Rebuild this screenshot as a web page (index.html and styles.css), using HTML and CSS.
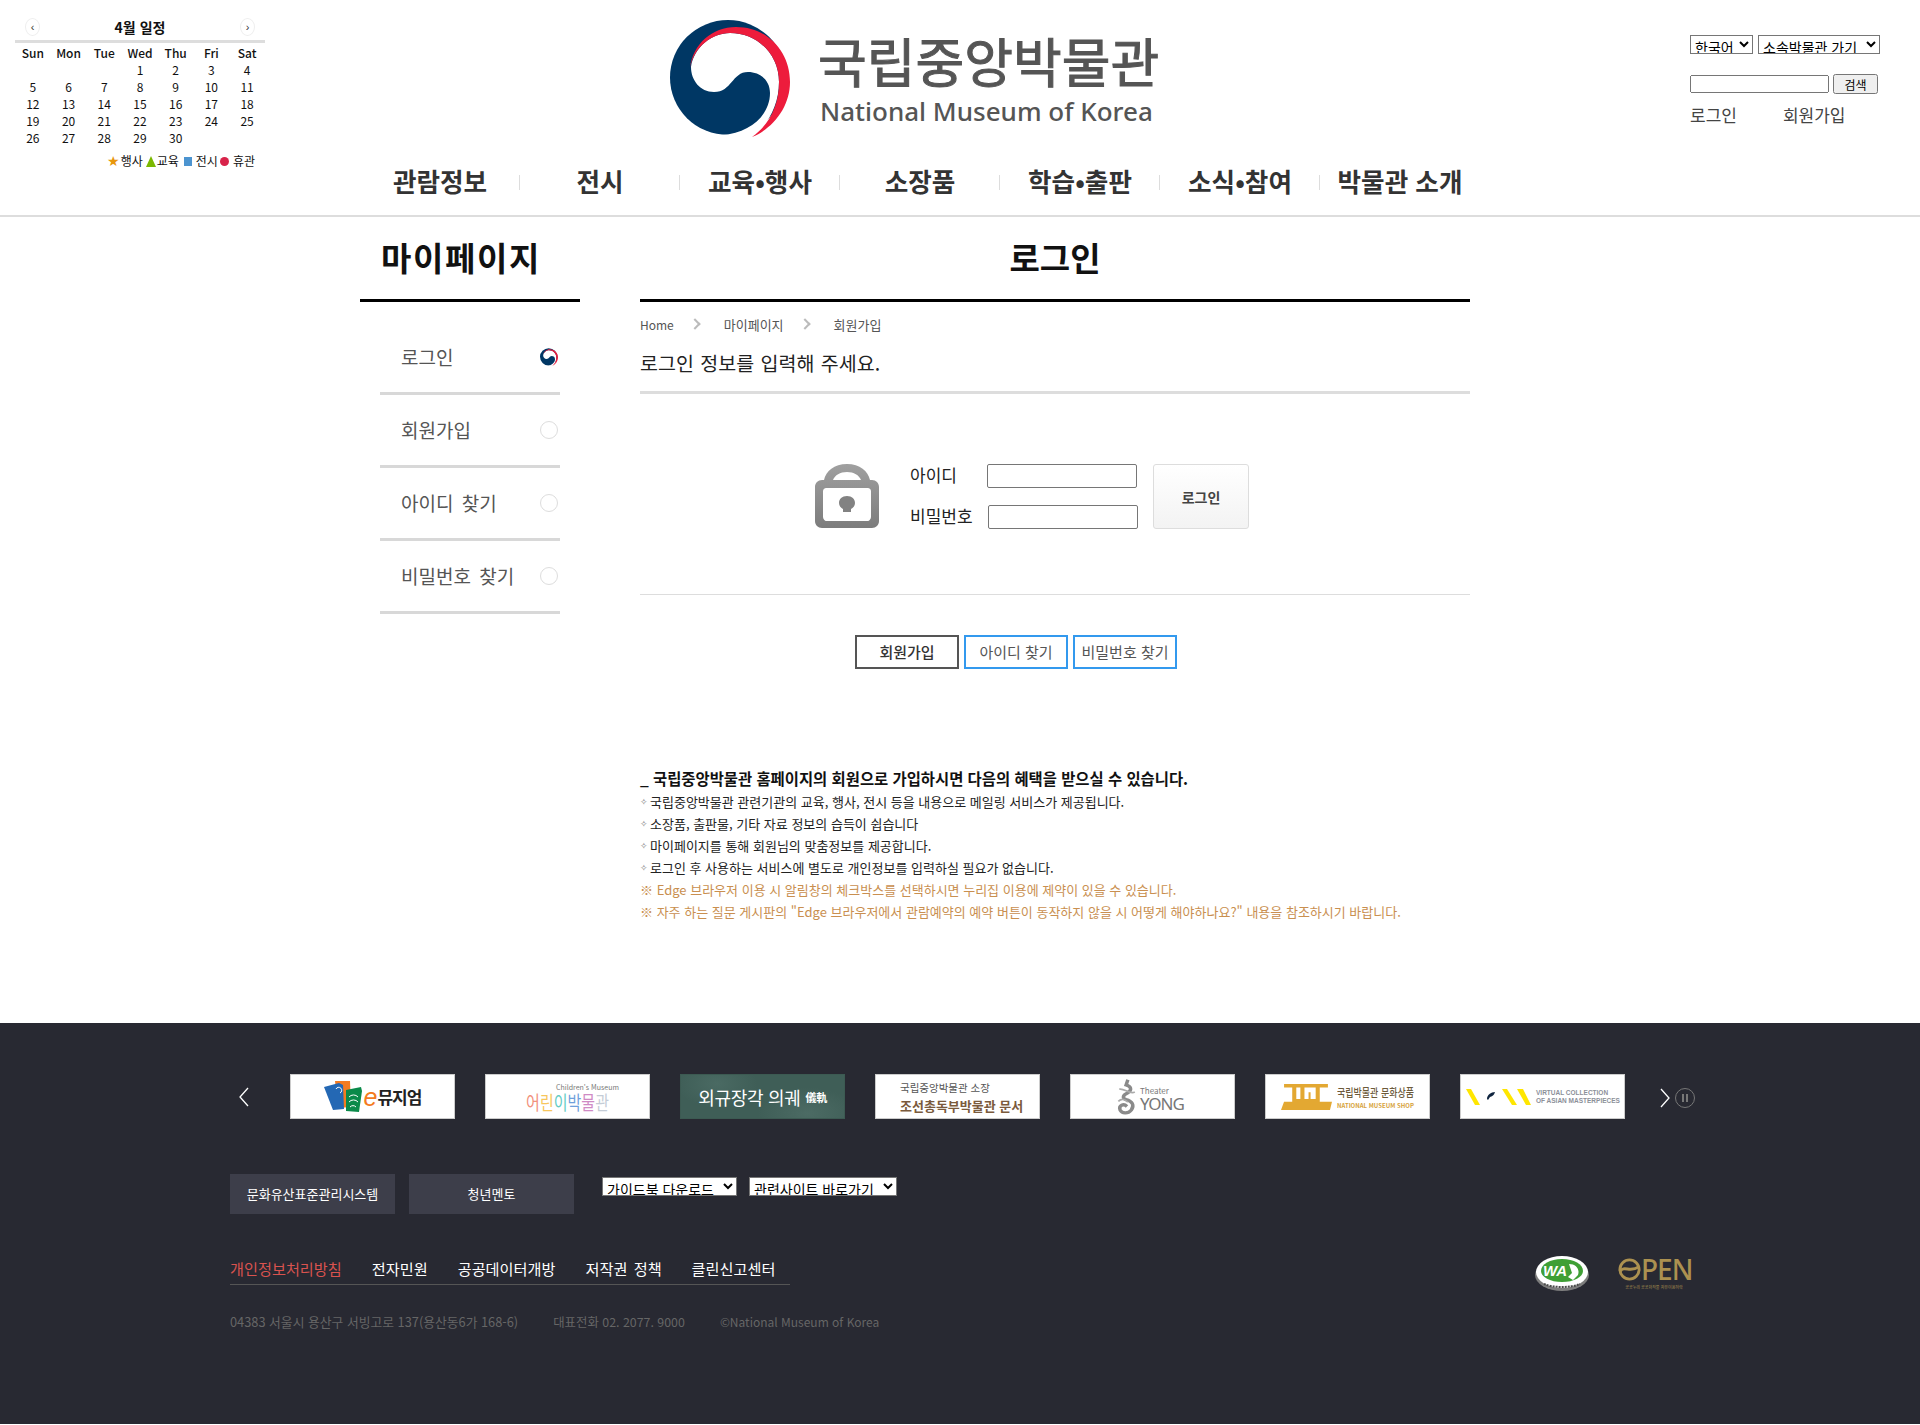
FILE: index.html
```html
<!DOCTYPE html>
<html lang="ko">
<head>
    <meta charset="UTF-8">
    <meta name="viewport" content="width=device-width, initial-scale=1.0">
    <title>로그인 | 국립중앙박물관</title>
    <link rel="stylesheet" href="styles.css">
</head>
<body>
    <svg class="defs" width="0" height="0">
        <symbol id="emblem" viewBox="0 0 120 117">
            <ellipse cx="58" cy="57.5" rx="58" ry="57.5" fill="#003764"/>
            <path fill="#fff" d="M21 47C24 27 42 13 60 13C88 13 109 35 109 62C109 85 98 105 82 117L52 115C80 113 100 95 100 73C100 60 90 52 78 52C62 52 62 72 44 72C30 72 21 60 21 47Z"/>
            <path fill="#ed1c3c" d="M20 48C23 24 42 7 66 7C98 7 120 32 120 62C120 86 104 108 82 117C100 104 109 85 109 62C109 35 88 13 60 13C42 13 24 27 20 48Z"/>
        </symbol>
    </svg>

    <header class="site-header">
        <div class="calendar">
            <div class="cal-head">
                <button class="cal-btn">&#8249;</button>
                <strong>4월 일정</strong>
                <button class="cal-btn">&#8250;</button>
            </div>
            <table class="cal-table">
                <thead>
                    <tr><th>Sun</th><th>Mon</th><th>Tue</th><th>Wed</th><th>Thu</th><th>Fri</th><th>Sat</th></tr>
                </thead>
                <tbody>
                    <tr><td></td><td></td><td></td><td>1</td><td>2</td><td>3</td><td>4</td></tr>
                    <tr><td>5</td><td>6</td><td>7</td><td>8</td><td>9</td><td>10</td><td>11</td></tr>
                    <tr><td>12</td><td>13</td><td>14</td><td>15</td><td>16</td><td>17</td><td>18</td></tr>
                    <tr><td>19</td><td>20</td><td>21</td><td>22</td><td>23</td><td>24</td><td>25</td></tr>
                    <tr><td>26</td><td>27</td><td>28</td><td>29</td><td>30</td><td></td><td></td></tr>
                </tbody>
            </table>
            <div class="cal-legend">
                <span class="lg-star">&#9733;</span>행사
                <i class="lg-tri"></i>교육
                <i class="lg-sq"></i>전시
                <i class="lg-dot"></i>휴관
            </div>
        </div>

        <a class="logo" href="#">
            <svg class="logo-mark"><use href="#emblem"/></svg>
            <span class="logo-text">
                <b>국립중앙박물관</b>
                <em>National Museum of Korea</em>
            </span>
        </a>

        <div class="tools">
            <div class="tools-row">
                <select class="sel-lang"><option>한국어</option></select>
                <select class="sel-branch"><option>소속박물관 가기</option></select>
            </div>
            <div class="tools-row search">
                <input type="text">
                <button>검색</button>
            </div>
            <div class="tools-links">
                <a href="#">로그인</a>
                <a href="#">회원가입</a>
            </div>
        </div>

        <nav class="gnb">
            <a href="#">관람정보</a>
            <a href="#">전시</a>
            <a href="#">교육•행사</a>
            <a href="#">소장품</a>
            <a href="#">학습•출판</a>
            <a href="#">소식•참여</a>
            <a href="#">박물관 소개</a>
        </nav>
    </header>

    <main class="page">
        <aside class="side">
            <h2 class="page-title">마이페이지</h2>
            <ul class="side-menu">
                <li><a href="#">로그인</a><svg class="mark"><use href="#emblem"/></svg></li>
                <li><a href="#">회원가입</a><i class="mark ring"></i></li>
                <li><a href="#">아이디 찾기</a><i class="mark ring"></i></li>
                <li><a href="#">비밀번호 찾기</a><i class="mark ring"></i></li>
            </ul>
        </aside>

        <section class="content">
            <h2 class="page-title">로그인</h2>
            <div class="crumbs">
                <span class="crumb-home">Home</span>
                <span class="crumb-sep"></span>
                <span>마이페이지</span>
                <span class="crumb-sep"></span>
                <span>회원가입</span>
            </div>
            <h3 class="lead">로그인 정보를 입력해 주세요.</h3>

            <form class="login">
                <svg class="lock" viewBox="0 0 64 64">
                    <defs>
                        <linearGradient id="lockfill" x1="0" y1="0" x2="0" y2="1">
                            <stop offset="0" stop-color="#a0a0a0"/>
                            <stop offset="1" stop-color="#7c7c7c"/>
                        </linearGradient>
                    </defs>
                    <path fill="url(#lockfill)" fill-rule="evenodd" d="M32 0C19 0 11 7 9 16H7C3 16 0 19 0 23V57C0 61 3 64 7 64H57C61 64 64 61 64 57V23C64 19 61 16 57 16H55C53 7 45 0 32 0ZM32 8C39 8 44 11 46 16H18C20 11 25 8 32 8ZM11 24H53C54 24 56 25 56 27V53C56 55 54 57 53 57H11C10 57 8 55 8 53V27C8 25 10 24 11 24Z"/>
                    <path fill="#828282" d="M32 32C27 32 24 35 24 39C24 42 26 44 28 45V48H36V45C38 44 40 42 40 39C40 35 37 32 32 32Z"/>
                </svg>
                <div class="login-fields">
                    <label><span>아이디</span> <input type="text"></label>
                    <label class="pw"><span>비밀번호</span> <input type="password"></label>
                </div>
                <button class="login-btn" type="button">로그인</button>
            </form>

            <div class="member-btns">
                <a class="on" href="#">회원가입</a>
                <a href="#">아이디 찾기</a>
                <a href="#">비밀번호 찾기</a>
            </div>

            <div class="benefit">
                <strong>_ 국립중앙박물관 홈페이지의 회원으로 가입하시면 다음의 혜택을 받으실 수 있습니다.</strong>
                <ul>
                    <li>국립중앙박물관 관련기관의 교육, 행사, 전시 등을 내용으로 메일링 서비스가 제공됩니다.</li>
                    <li>소장품, 출판물, 기타 자료 정보의 습득이 쉽습니다</li>
                    <li>마이페이지를 통해 회원님의 맞춤정보를 제공합니다.</li>
                    <li>로그인 후 사용하는 서비스에 별도로 개인정보를 입력하실 필요가 없습니다.</li>
                </ul>
                <p>※ Edge 브라우저 이용 시 알림창의 체크박스를 선택하시면 누리집 이용에 제약이 있을 수 있습니다.</p>
                <p>※ 자주 하는 질문 게시판의 "Edge 브라우저에서 관람예약의 예약 버튼이 동작하지 않을 시 어떻게 해야하나요?" 내용을 참조하시기 바랍니다.</p>
            </div>
        </section>
    </main>

    <footer class="site-footer">
        <div class="slider">
            <svg class="arrow prev" viewBox="0 0 10 20"><path d="M9 1L1 10L9 19"/></svg>
            <a class="bn" href="#">
                <svg class="bn1-icon" viewBox="0 0 38 31">
                    <path fill="#f47b20" d="M11 0H26L27 26L14 27Z"/>
                    <path fill="#2468b4" d="M0 6L15 2L19 4L20 28L9 29Z"/>
                    <path fill="#0a8a4a" d="M22 9L37 6L38 10L35 31L22 30Z"/>
                    <path fill="none" stroke="#fff" d="M12 8a3 3 0 1 1 4 4M25 16a6 6 0 0 1 9 0M25 21a6 6 0 0 1 9 0M26 26a4 4 0 0 1 6 0"/>
                </svg>
                <span class="bn1-e">e</span><span class="bn1-txt">뮤지엄</span>
            </a>
            <a class="bn bn2" href="#">
                <small>Children's Museum</small>
                <span><i class="c1">어</i><i class="c2">린</i><i class="c3">이</i><i class="c4">박</i><i class="c5">물</i><i class="c6">관</i></span>
            </a>
            <a class="bn bn3" href="#">외규장각 의궤<small>儀軌</small></a>
            <a class="bn bn4" href="#">
                <small>국립중앙박물관 소장</small>
                <b>조선총독부박물관 문서</b>
            </a>
            <a class="bn bn5" href="#">
                <svg class="dragon" viewBox="0 0 24 44">
                    <path fill="none" stroke="#8a8a8a" stroke-width="4" d="M13 2L11 8C17 10 18 14 13 17C7 20 6 23 11 25C18 27 21 31 17 37C13 42 6 41 4 37C2 32 8 29 12 33"/>
                    <path fill="none" stroke="#aaa" stroke-width="2" d="M3 13C8 11 16 20 21 16M2 27C6 23 10 25 13 28"/>
                </svg>
                <span><small>Theater</small><b>YONG</b></span>
            </a>
            <a class="bn bn6" href="#">
                <svg class="shop" viewBox="0 0 50 38" preserveAspectRatio="none">
                    <path fill="#e3a832" d="M3 0H46V5H38V26H50L48 38H0L3 26H11V5H3ZM15 5V22H19V5ZM23 5V22H27V12H29V22H34V5Z"/>
                </svg>
                <span><b>국립박물관 문화상품</b><small>NATIONAL MUSEUM SHOP</small></span>
            </a>
            <a class="bn bn7" href="#">
                <svg class="vc" viewBox="0 0 66 16">
                    <path fill="#ffe600" d="M0 0H5L14 16H9ZM36 0H41L51 16H46ZM51 0H57L65 16H60Z"/>
                    <path fill="#10253f" d="M21 10C21 6 25 3 29 3C28 6 27 7 24 8L22 11Z"/>
                </svg>
                <span>VIRTUAL COLLECTION<br>OF ASIAN MASTERPIECES</span>
            </a>
            <svg class="arrow next" viewBox="0 0 10 20"><path d="M1 1L9 10L1 19"/></svg>
            <button class="pause"><i></i><i></i></button>
        </div>

        <div class="foot-links">
            <a class="foot-btn" href="#">문화유산표준관리시스템</a>
            <a class="foot-btn" href="#">청년멘토</a>
            <select class="sel-guide"><option>가이드북 다운로드</option></select>
            <select class="sel-site"><option>관련사이트 바로가기</option></select>
        </div>

        <div class="foot-bottom">
            <div>
                <ul class="policy">
                    <li><a class="red" href="#">개인정보처리방침</a></li>
                    <li><a href="#">전자민원</a></li>
                    <li><a href="#">공공데이터개방</a></li>
                    <li><a href="#">저작권 정책</a></li>
                    <li><a href="#">클린신고센터</a></li>
                </ul>
                <div class="address">
                    <span>04383 서울시 용산구 서빙고로 137(용산동6가 168-6)</span>
                    <span class="tel">대표전화 02. 2077. 9000</span>
                    <span class="copy">©National Museum of Korea</span>
                </div>
            </div>
            <div class="certs">
                <svg class="wa" viewBox="0 0 54 38">
                    <ellipse cx="27" cy="20" rx="27" ry="16" fill="#7d7d7d"/>
                    <ellipse cx="27" cy="17" rx="26" ry="16" fill="#fff"/>
                    <path fill="#3f9f35" d="M6 16C6 9 15 4 27 4C39 4 48 9 48 16C48 22 39 27 27 27C15 27 6 22 6 16Z"/>
                    <text x="8" y="21" class="wa-text">WA</text>
                    <path fill="#fff" d="M34 9C41 9 45 14 43 20L38 25L33 22L37 18Z"/>
                    <path fill="none" stroke="#4a4a4a" stroke-width="2" stroke-dasharray="2 1" d="M9 29C18 33 36 33 45 29"/>
                </svg>
                <div class="open">
                    <span class="open-mark">
                        <svg class="open-o" viewBox="0 0 24 24"><circle cx="12" cy="12" r="10"/><path d="M2 14C7 7 12 16 22 9"/></svg>PEN
                    </span>
                    <small>공공누리 공공저작물 자유이용허락</small>
                </div>
            </div>
        </div>
    </footer>
</body>
</html>
```

FILE: styles.css
```css
* { box-sizing: border-box; }
html, body { margin: 0; padding: 0; }
body { font-family: "Noto Sans CJK KR", "Noto Sans", sans-serif; color: #222; background: #fff; }
a { color: inherit; text-decoration: none; }
ul { list-style: none; margin: 0; padding: 0; }
h2, h3, p { margin: 0; }
.defs { display: block; height: 0; }

/* header */
.site-header { display: grid; grid-template-columns: 360px 1120px 1fr; grid-template-rows: 165px 50px; height: 217px; border-bottom: 2px solid #ddd; }
.calendar { grid-row: 1 / 3; width: 250px; margin-left: 15px; padding-top: 18px; font-size: 12px; color: #111; }
.cal-head { display: flex; justify-content: space-between; align-items: center; height: 25px; padding: 0 10px 4px; border-bottom: 3px solid #ddd; font-size: 14px; }
.cal-btn { width: 15px; height: 18px; padding: 0; border: 1px solid #eee; border-radius: 50%; background: #fff; font-size: 11px; line-height: 14px; color: #333; }
.cal-table { width: 100%; table-layout: fixed; border-collapse: collapse; margin-top: 1px; }
.cal-table th, .cal-table td { height: 17px; padding: 0; text-align: center; line-height: 17px; font-weight: 400; }
.cal-table th { font-weight: 500; }
.cal-legend { display: flex; justify-content: flex-end; align-items: center; gap: 1px; height: 18px; margin-top: 6px; padding-right: 10px; line-height: 18px; font-size: 12px; }
.lg-star { color: #e8970c; font-size: 14px; font-family: "DejaVu Sans", sans-serif; }
.lg-tri { width: 0; height: 0; margin-left: 2px; border: 5px solid transparent; border-top: 0; border-bottom: 11px solid #7ab800; }
.lg-sq { width: 8px; height: 9px; margin: 0 3px 0 4px; background: #4c94d0; }
.lg-dot { width: 9px; height: 9px; margin: 0 3px 0 1px; border-radius: 50%; background: #d8234a; }

.logo { grid-column: 2; grid-row: 1; display: flex; gap: 28px; padding: 20px 0 0 310px; }
.logo-mark { width: 120px; height: 117px; }
.logo-text { display: block; padding-top: 16px; color: #555; }
.logo-text b { display: block; font-size: 53px; line-height: 49px; font-weight: 400; white-space: nowrap; -webkit-text-stroke: 1px #555; }
.logo-text em { display: block; margin-top: 13px; padding-left: 2px; font-family: "Noto Sans", sans-serif; font-style: normal; font-size: 26px; line-height: 26px; font-weight: 500; white-space: nowrap; }

.tools { grid-column: 3; grid-row: 1; padding: 35px 0 0 210px; }
.tools-row { display: flex; gap: 5px; }
.tools-row select { height: 19px; padding: 0; font-family: inherit; font-size: 14px; background: #fff; }
.sel-lang { width: 63px; }
.sel-branch { width: 122px; }
.search { align-items: center; gap: 4px; margin-top: 20px; }
.search input { width: 139px; height: 18px; }
.search button { width: 45px; height: 20px; padding: 0; font-family: inherit; font-size: 12px; }
.tools-links { display: flex; gap: 46px; margin-top: 11px; font-size: 17px; line-height: 20px; color: #444; }

.gnb { grid-column: 2; grid-row: 2; display: flex; align-items: flex-start; }
.gnb a { width: 160px; height: 34px; line-height: 32px; text-align: center; font-size: 25.6px; font-weight: 700; color: #333; white-space: nowrap; background: linear-gradient(#ddd, #ddd) right center / 1px 15px no-repeat; }
.gnb a:last-child { background: none; }

/* main */
.page { display: flex; gap: 60px; height: 806px; padding-left: 360px; }
.side { width: 220px; }
.content { width: 830px; }
.page-title { height: 85px; border-bottom: 3px solid #000; line-height: 80px; text-align: center; font-size: 33px; font-weight: 700; color: #111; }
.side .page-title { padding-right: 18px; letter-spacing: 1.6px; }
.side-menu { padding: 20px 20px 0; }
.side-menu li { display: flex; justify-content: space-between; align-items: center; height: 73px; padding: 0 2px 0 21px; border-bottom: 3px solid #d8d8d8; font-size: 19px; word-spacing: 3px; color: #555; }
.side-menu a { padding-bottom: 2px; }
.mark { display: block; width: 18px; height: 18px; }
.ring { border: 1px solid #ddd; border-radius: 50%; }

.crumbs { display: flex; align-items: center; height: 16px; margin-top: 14px; margin-bottom: 2px; font-size: 13px; color: #555; }
.crumb-home { font-size: 12px; }
.crumb-sep { width: 8px; height: 8px; margin: 0 25px 0 17px; border: solid #bbb; border-width: 2px 2px 0 0; transform: rotate(45deg); }
.lead { display: flex; align-items: center; height: 60px; border-bottom: 3px solid #ddd; font-size: 19.5px; font-weight: 400; word-spacing: 1px; color: #222; }

.login { display: flex; align-items: flex-start; height: 201px; padding: 70px 0 0 175px; border-bottom: 1px solid #ddd; }
.lock { width: 64px; height: 64px; margin-right: 31px; }
.login-fields { display: grid; gap: 17px; width: 228px; }
.login-fields label { display: flex; justify-content: space-between; align-items: center; width: 227px; height: 24px; font-size: 17px; color: #222; }
.login-fields label span { padding-bottom: 4px; }
.login-fields input { width: 150px; height: 24px; padding: 0 4px; border: 1px solid #767676; border-radius: 2px; }
.login-fields .pw { width: 228px; }
.login-btn { width: 96px; height: 65px; margin-left: 15px; border: 1px solid #ddd; border-radius: 3px; background: linear-gradient(#fff, #f3f3f3); font-family: inherit; font-size: 14px; font-weight: 700; color: #444; }

.member-btns { display: flex; gap: 5px; padding: 40px 0 0 215px; }
.member-btns a { width: 104px; height: 34px; border: 2px solid #3399ee; line-height: 29px; text-align: center; font-size: 15px; color: #555; }
.member-btns .on { border-color: #555; font-weight: 500; color: #333; }

.benefit { margin-top: 98px; font-size: 13px; line-height: 22px; color: #222; white-space: nowrap; }
.benefit strong { display: block; height: 24px; font-size: 15.4px; font-weight: 700; color: #111; }
.benefit li { display: flex; align-items: center; height: 22px; }
.benefit li::before { content: "\2727"; width: 10px; font-family: "DejaVu Sans", sans-serif; font-size: 9px; color: #777; }
.benefit p { height: 22px; color: #c98f50; }

/* footer */
.site-footer { height: 401px; padding-top: 51px; background: #282932; color: #fff; }
.slider { display: flex; align-items: center; height: 45px; padding-left: 239px; }
.arrow { width: 10px; height: 20px; }
.arrow path { fill: none; stroke: #fff; stroke-width: 1.3; }
.prev { margin-right: 41px; margin-top: 1px; }
.next { margin-left: 35px; margin-top: 3px; }
.pause { display: flex; justify-content: center; align-items: center; gap: 2px; width: 20px; height: 20px; margin-left: 5px; margin-top: 3px; padding: 0; border: 1px solid #777; border-radius: 50%; background: none; }
.pause i { width: 2px; height: 8px; border: solid #777; border-width: 0 1px; }
.bn { display: flex; flex: none; justify-content: center; align-items: center; width: 165px; height: 45px; margin-right: 30px; border: 1px solid #ccc; background: #fff; color: #333; overflow: hidden; white-space: nowrap; }
.bn7 { margin-right: 0; }
.bn1-icon { width: 38px; height: 31px; }
.bn1-e { margin: 0 0 0 2px; font-family: "Liberation Sans", sans-serif; font-style: italic; font-size: 25px; line-height: 30px; color: #f47b20; }
.bn1-txt { font-size: 17px; font-weight: 700; letter-spacing: -1px; color: #222; }
.bn2 { flex-direction: column; padding-top: 2px; }
.bn2 small { display: block; margin-left: 40px; font-size: 7px; line-height: 8px; color: #777; }
.bn2 span { display: block; font-size: 15px; line-height: 22px; transform: scaleY(1.3); }
.bn2 i { font-style: normal; }
.c1 { color: #f2917c; }
.c2 { color: #f7c65c; }
.c3 { color: #63ccc4; }
.c4 { color: #6f9fdc; }
.c5 { color: #cf8ac4; }
.c6 { color: #c4ccd6; }
.bn3 { border-color: #3c5a52; background: radial-gradient(ellipse 40px 24px at 22% 20%, #4a6a63, transparent), radial-gradient(ellipse 50px 26px at 78% 90%, #4c6b64, transparent), #3f5e57; font-size: 18px; letter-spacing: -.3px; color: #fff; }
.bn3 small { margin-left: 5px; font-size: 11px; font-weight: 700; }
.bn4 { flex-direction: column; align-items: flex-start; padding-left: 24px; }
.bn4 small { font-size: 10.5px; line-height: 17px; color: #555; }
.bn4 b { font-size: 13px; line-height: 19px; color: #7a5a3c; }
.bn5 { gap: 1px; padding-right: 6px; color: #777; }
.dragon { width: 24px; height: 38px; }
.bn5 span { display: flex; flex-direction: column; padding-top: 5px; }
.bn5 small { font-size: 8px; line-height: 9px; }
.bn5 b { font-family: "Noto Sans", sans-serif; font-size: 17px; line-height: 18px; font-weight: 400; letter-spacing: -1px; }
.bn6 { justify-content: flex-start; gap: 5px; padding-left: 15px; }
.shop { width: 51px; height: 26px; }
.bn6 span { display: flex; flex-direction: column; }
.bn6 b { font-size: 9px; line-height: 17px; font-weight: 500; color: #6c5a3a; transform: scaleY(1.25); }
.bn6 small { font-size: 6px; line-height: 9px; font-weight: 700; color: #d6a23a; }
.bn7 { justify-content: flex-start; gap: 4px; padding-left: 5px; }
.vc { width: 66px; height: 16px; }
.bn7 span { font-family: "Liberation Sans", sans-serif; font-size: 6.5px; line-height: 8px; font-weight: 700; color: #8c9099; }

.foot-links { display: flex; align-items: flex-start; margin-top: 55px; padding-left: 230px; }
.foot-btn { width: 165px; height: 40px; margin-right: 14px; background: #3d3e4a; line-height: 39px; text-align: center; font-size: 13px; }
.foot-links select { height: 19px; margin-top: 3px; padding: 0; border: 1px solid #767676; background: #fff; font-family: inherit; font-size: 14px; }
.sel-guide { width: 135px; margin-left: 14px; margin-right: 12px; }
.sel-site { width: 148px; }

.foot-bottom { display: flex; justify-content: space-between; margin-top: 41px; padding: 0 230px; }
.policy { display: flex; gap: 30px; width: 560px; height: 30px; padding-top: 3px; border-bottom: 1px solid #555; line-height: 20px; font-size: 15.2px; word-spacing: 2px; }
.red { color: #d9534f; }
.address { display: flex; align-items: center; gap: 35px; margin-top: 28px; font-size: 12.8px; line-height: 18px; color: #666; }
.tel { font-size: 12.4px; }
.copy { font-size: 12px; }
.certs { display: flex; align-items: flex-start; gap: 29px; }
.wa { width: 54px; height: 38px; }
.wa-text { font-family: "Liberation Sans", sans-serif; font-size: 15px; font-weight: 700; font-style: italic; fill: #fff; }
.open { width: 72px; margin-top: 2px; color: #ac9150; text-align: center; }
.open-mark { display: flex; align-items: center; font-family: "Noto Sans", sans-serif; font-size: 28px; line-height: 25px; font-weight: 500; letter-spacing: -1px; }
.open-o { flex: none; width: 23px; height: 23px; }
.open-o circle, .open-o path { fill: none; stroke: #ac9150; stroke-width: 3; }
.open small { display: block; font-size: 4px; line-height: 10px; white-space: nowrap; }
```
